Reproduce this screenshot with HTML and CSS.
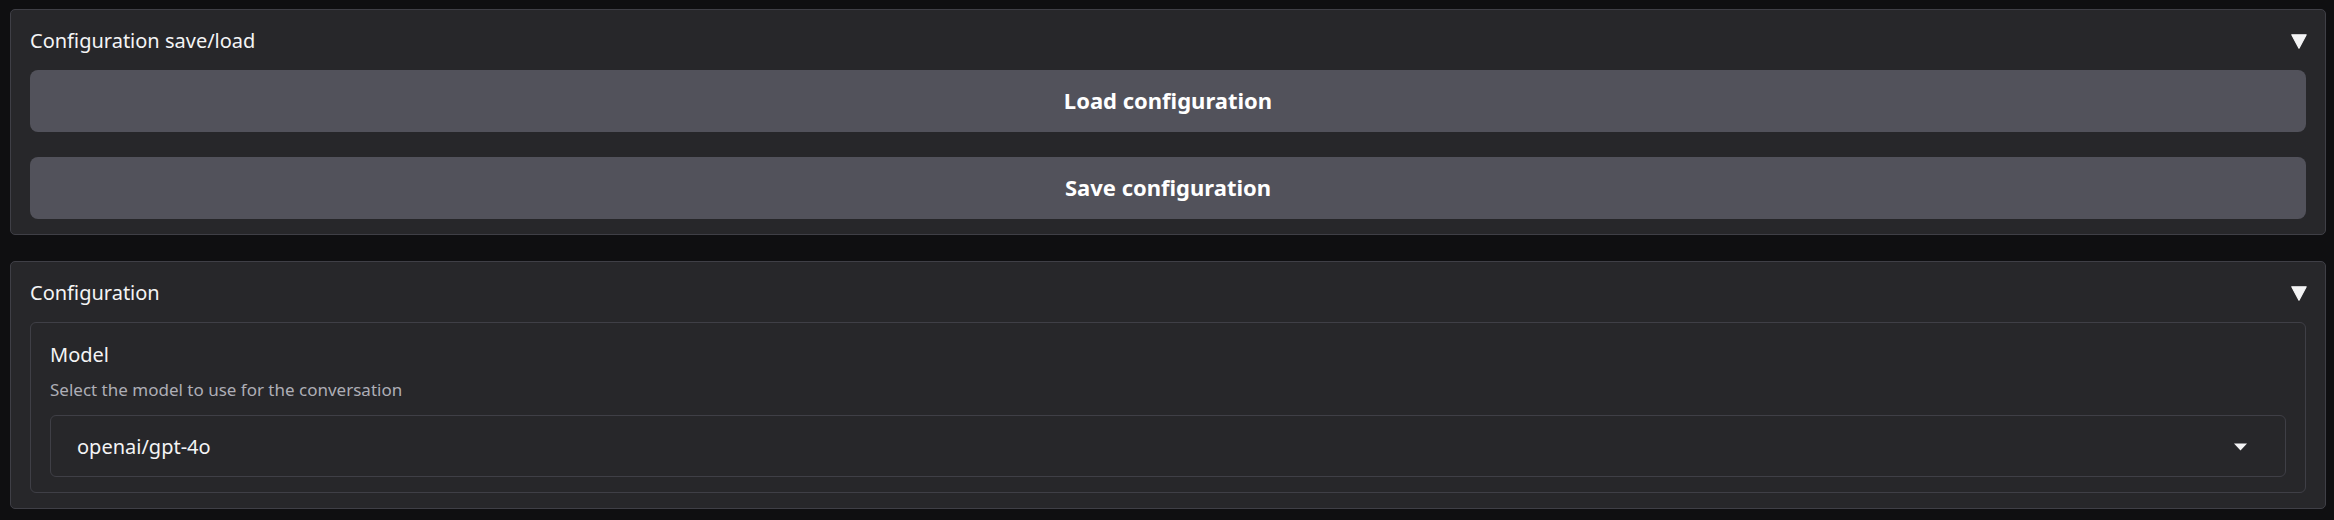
FILE: index.html
```html
<!DOCTYPE html>
<html lang="en">
<head>
<meta charset="utf-8">
<title>Configuration</title>
<link rel="stylesheet" href="styles.css">
</head>
<body>
<div class="page">
  <section class="accordion">
    <div class="acc-head">
      <span class="acc-title">Configuration save/load</span>
      <svg class="acc-icon" width="16" height="15" viewBox="0 0 16 15"><polygon points="0.8,0.8 15.2,0.8 8,14.2" fill="#f4f4f5" stroke="#f4f4f5" stroke-width="1.2" stroke-linejoin="round"/></svg>
    </div>
    <div class="acc-body buttons">
      <button class="btn">Load configuration</button>
      <button class="btn">Save configuration</button>
    </div>
  </section>

  <section class="accordion">
    <div class="acc-head">
      <span class="acc-title">Configuration</span>
      <svg class="acc-icon" width="16" height="15" viewBox="0 0 16 15"><polygon points="0.8,0.8 15.2,0.8 8,14.2" fill="#f4f4f5" stroke="#f4f4f5" stroke-width="1.2" stroke-linejoin="round"/></svg>
    </div>
    <div class="acc-body">
      <div class="field">
        <div class="field-label">Model</div>
        <div class="field-info">Select the model to use for the conversation</div>
        <div class="select">
          <span class="select-value">openai/gpt-4o</span>
          <svg class="select-arrow" width="13" height="8" viewBox="0 0 13 8"><polygon points="0,0.5 13,0.5 6.5,7.5" fill="#f4f4f5"/></svg>
        </div>
      </div>
    </div>
  </section>
</div>
</body>
</html>
```

FILE: styles.css
```css
html, body {
  margin: 0;
  padding: 0;
  background: #0f0f11;
}

body {
  font-family: "Noto Sans", "Open Sans", "DejaVu Sans", sans-serif;
  color: #f4f4f5;
}

.page {
  display: flex;
  flex-direction: column;
  gap: 26px;
  padding: 9px 8px 10px 10px;
}

.accordion {
  background: #27272a;
  border: 1px solid #3f3f46;
  border-radius: 5px;
  padding: 13px 19px 15px 19px;
}

.acc-head {
  display: flex;
  align-items: center;
  justify-content: space-between;
  height: 36px;
  margin-bottom: 11px;
}

.acc-title {
  font-size: 20px;
  line-height: 36px;
  color: #f4f4f5;
}

.acc-icon {
  display: block;
  margin-right: -1px;
}

.buttons {
  display: flex;
  flex-direction: column;
  gap: 25px;
}

.btn {
  display: block;
  width: 100%;
  height: 62px;
  border: none;
  border-radius: 8px;
  background: #52525b;
  color: #ffffff;
  font-family: "Noto Sans", "Open Sans", "DejaVu Sans", sans-serif;
  font-weight: 700;
  font-size: 22px;
  padding: 0 0 2px 0;
}

.field {
  border: 1px solid #3f3f46;
  border-radius: 6px;
  padding: 19px 19px 15px 19px;
}

.field-label {
  font-size: 20px;
  line-height: 26px;
  color: #f4f4f5;
}

.field-info {
  font-size: 17px;
  line-height: 24px;
  color: #aeaeb6;
  margin-top: 10px;
}

.select {
  margin-top: 13px;
  height: 62px;
  box-sizing: border-box;
  border: 1px solid #3f3f46;
  border-radius: 6px;
  background: #27272a;
  display: flex;
  align-items: center;
  justify-content: space-between;
  padding: 0 38px 0 26px;
}

.select-value {
  font-size: 20px;
  color: #f4f4f5;
}

.select-arrow {
  display: block;
  margin-top: 2px;
}
```
